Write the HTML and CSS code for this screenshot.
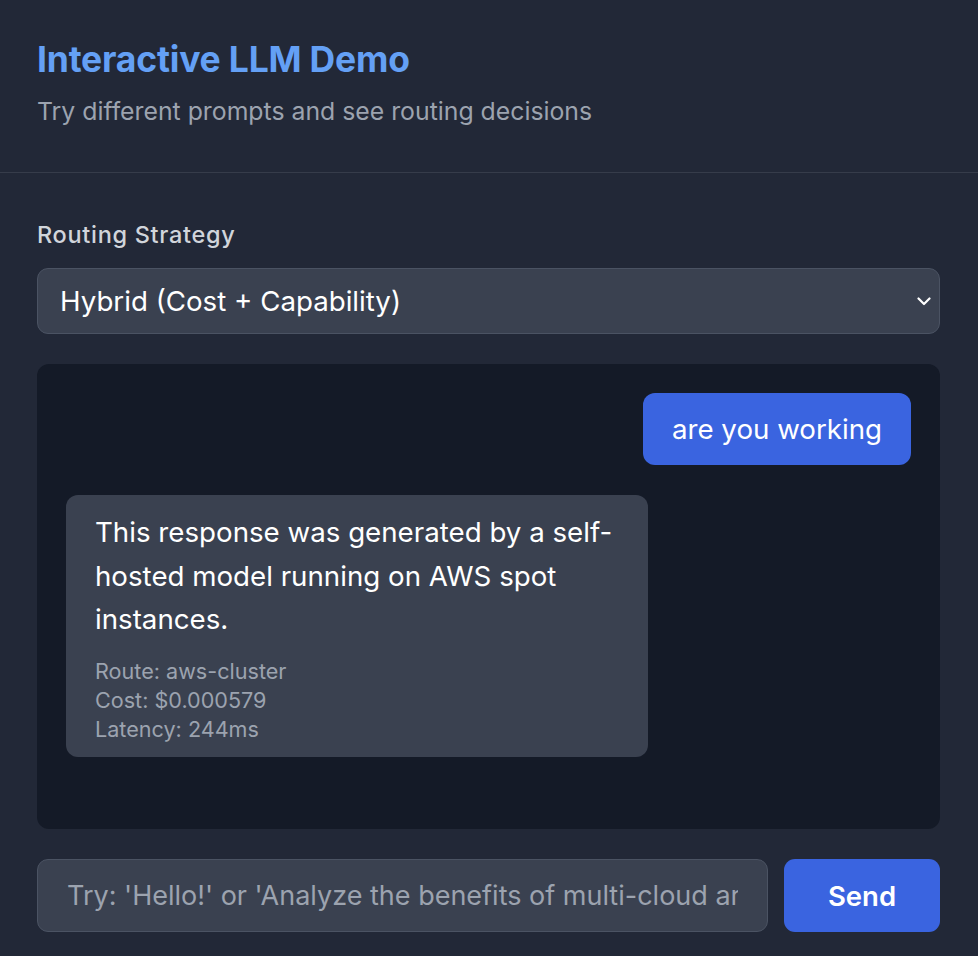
FILE: index.html
```html
<!DOCTYPE html>
<html lang="en">
<head>
<meta charset="utf-8">
<title>Interactive LLM Demo</title>
<link rel="stylesheet" href="styles.css">
</head>
<body>
<div class="app">
  <header class="header">
    <h1 class="title">Interactive LLM Demo</h1>
    <p class="subtitle">Try different prompts and see routing decisions</p>
  </header>
  <main class="content">
    <label class="label" for="strategy">Routing Strategy</label>
    <div class="select-wrap">
      <select id="strategy" class="select">
        <option>Hybrid (Cost + Capability)</option>
      </select>
      <svg class="chevron" width="14" height="9" viewBox="0 0 14 9" aria-hidden="true"><path d="M1.5 1.5 L7 7 L12.5 1.5" fill="none" stroke="#ffffff" stroke-width="2.2" stroke-linecap="round" stroke-linejoin="round"/></svg>
    </div>
    <section class="chat">
      <div class="msg user">are you working</div>
      <div class="msg bot">
        <p class="bot-text">This response was generated by a self-hosted model running on AWS spot instances.</p>
        <div class="meta">
          <div>Route: aws-cluster</div>
          <div>Cost: $0.000579</div>
          <div>Latency: 244ms</div>
        </div>
      </div>
    </section>
    <div class="composer">
      <input class="input" type="text" placeholder="Try: 'Hello!' or 'Analyze the benefits of multi-cloud architecture'">
      <button class="send" type="button">Send</button>
    </div>
  </main>
</div>
</body>
</html>
```
FILE: styles.css
```css
* { box-sizing: border-box; }
html, body { margin: 0; padding: 0; }
body {
  background: #222837;
  font-family: Inter, "Noto Sans", sans-serif;
  color: #ffffff;
}
.app { width: 978px; height: 956px; }
.header {
  padding: 37px 37px 0;
  height: 173px;
  border-bottom: 1px solid #363c4a;
}
.title {
  margin: 0;
  font-size: 35.5px;
  line-height: 46px;
  font-weight: 700;
  color: #64a0f5;
  letter-spacing: -0.2px;
}
.subtitle {
  margin: 12px 0 0;
  font-size: 24.8px;
  line-height: 32px;
  color: #9ca3af;
}
.content {
  padding: 46px 38px 0 37px;
  display: flex;
  flex-direction: column;
}
.label {
  font-size: 23.5px;
  line-height: 32px;
  font-weight: 500;
  letter-spacing: 0.7px;
  color: #d1d5db;
  margin-bottom: 17px;
}
.select-wrap { position: relative; }
.select {
  appearance: none;
  -webkit-appearance: none;
  width: 100%;
  height: 66px;
  background: #3a4150;
  border: 1px solid #4b5363;
  border-radius: 11px;
  color: #ffffff;
  font-family: inherit;
  font-size: 27.7px;
  padding: 0 22px;
  outline: none;
}
.chevron {
  position: absolute;
  right: 9px;
  top: 29px;
}
.chat {
  margin-top: 30px;
  height: 465px;
  background: #141a27;
  border-radius: 12px;
  padding: 29px;
  display: flex;
  flex-direction: column;
  gap: 30px;
}
.msg { border-radius: 12px; }
.user {
  align-self: flex-end;
  background: #3a64e0;
  font-size: 27.7px;
  line-height: 72px;
  height: 72px;
  padding: 0 29px;
}
.bot {
  align-self: flex-start;
  width: 582px;
  background: #3a4150;
  padding: 16px 29px 13px;
}
.bot-text {
  margin: 0;
  font-size: 27.7px;
  line-height: 43.5px;
}
.meta {
  margin-top: 15px;
  font-size: 21.6px;
  line-height: 29px;
  color: #9ca3af;
}
.composer {
  margin-top: 30px;
  display: flex;
  gap: 16px;
}
.input {
  flex: 1;
  height: 73px;
  background: #3a4150;
  border: 1px solid #4b5363;
  border-radius: 11px;
  color: #ffffff;
  font-family: inherit;
  font-size: 27px;
  padding: 0 29px;
  outline: none;
}
.input::placeholder { color: #9ca3af; }
.send {
  width: 156px;
  height: 73px;
  background: #3a64e0;
  border: none;
  border-radius: 11px;
  color: #ffffff;
  font-family: inherit;
  font-size: 27.5px;
  font-weight: 600;
}
```
